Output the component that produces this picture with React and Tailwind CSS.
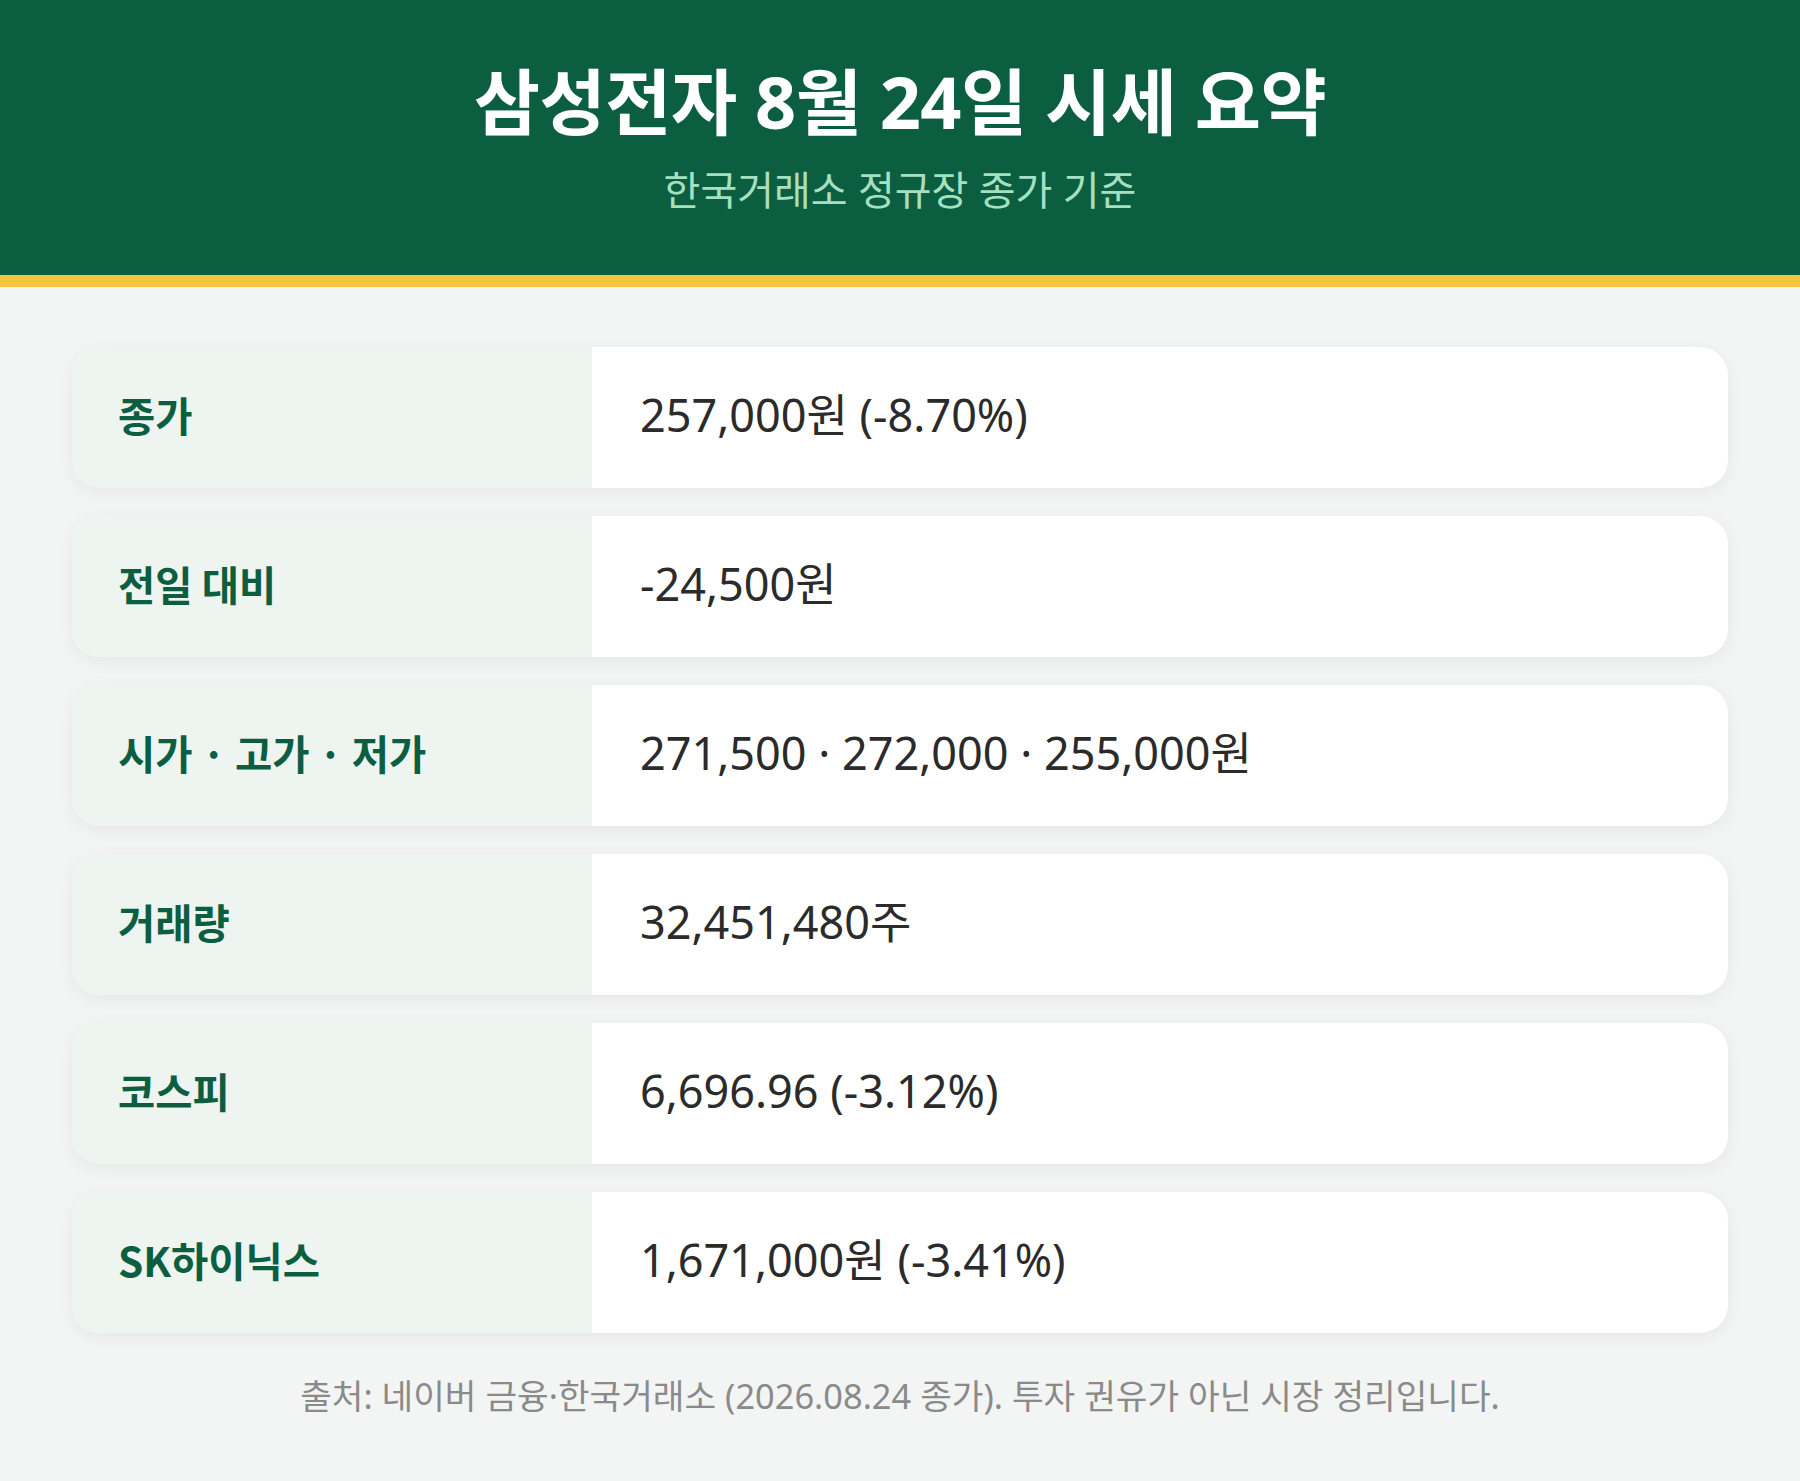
import React from 'react';

const rows = [
  { label: '종가', value: '257,000원 (-8.70%)' },
  { label: '전일 대비', value: '-24,500원' },
  { label: '시가 · 고가 · 저가', value: '271,500 · 272,000 · 255,000원' },
  { label: '거래량', value: '32,451,480주' },
  { label: '코스피', value: '6,696.96 (-3.12%)' },
  { label: 'SK하이닉스', value: '1,671,000원 (-3.41%)' },
];

export default function App() {
  return (
    <div
      className="min-h-[1481px] w-full bg-[#f3f5f4]"
      style={{ fontFamily: '"Noto Sans", "Noto Sans CJK KR", sans-serif' }}
    >
      {/* Header */}
      <header className="bg-[#0c5e41] border-b-[12px] border-[#f4c344] pt-[58px] pb-[62px] text-center">
        <h1 className="text-[72px] leading-[86px] font-bold text-white tracking-[-0.5px]">
          삼성전자 8월 24일 시세 요약
        </h1>
        <p className="mt-[22px] text-[40px] leading-[47px] text-[#a6e0c0]">
          한국거래소 정규장 종가 기준
        </p>
      </header>

      {/* Rows */}
      <main className="px-[72px] pt-[60px]">
        <div className="flex flex-col gap-[28px]">
          {rows.map((row, idx) => (
            <div
              key={idx}
              className="flex h-[141px] rounded-[28px] overflow-hidden bg-white shadow-[0_4px_18px_rgba(0,0,0,0.06)]"
            >
              <div className="w-[520px] shrink-0 bg-[#eef4f0] flex items-center pl-[46px] pb-[6px]">
                <span
                  className="text-[40.5px] leading-[56px] font-bold text-[#0c5e41]"
                  style={{ fontFamily: '"Noto Sans CJK KR", "Noto Sans", sans-serif' }}
                >
                  {row.label}
                </span>
              </div>
              <div className="flex-1 flex items-center pl-[48px] pb-[6px]">
                <span className="text-[45px] leading-[60px] text-[#2b2b2b]">{row.value}</span>
              </div>
            </div>
          ))}
        </div>

        <p className="mt-[39px] text-center text-[34.4px] leading-[48px] text-[#8a8a8a]">
          출처: 네이버 금융·한국거래소 (2026.08.24 종가). 투자 권유가 아닌 시장 정리입니다.
        </p>
      </main>
    </div>
  );
}
